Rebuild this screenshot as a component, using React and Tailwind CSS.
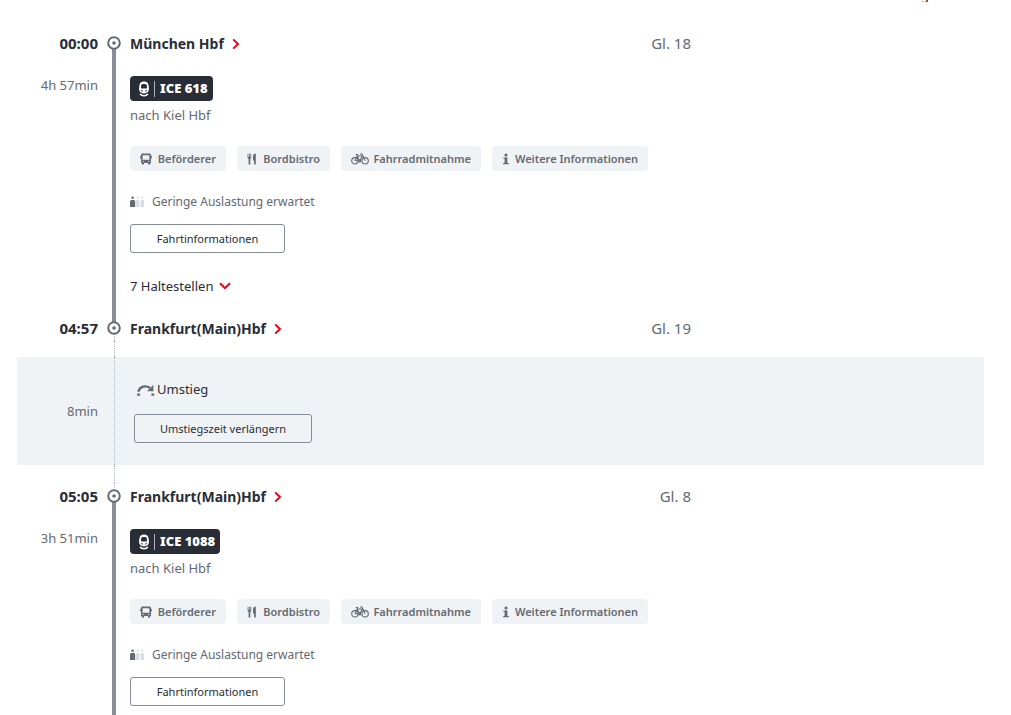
const stop = { ring: '#646973', line: '#878c96', red: '#ec0016' };

function Chevron({ down = false }) {
  return down ? (
    <svg width="12" height="8" viewBox="0 0 12 8" fill="none" stroke={stop.red} strokeWidth="2" aria-hidden="true">
      <path d="M1 1.2 6 6.2 11 1.2" />
    </svg>
  ) : (
    <svg width="8" height="12" viewBox="0 0 8 12" fill="none" stroke={stop.red} strokeWidth="2" aria-hidden="true">
      <path d="M1.2 1.4 6 6 1.2 10.6" />
    </svg>
  );
}

function TrainIcon() {
  return (
    <svg width="12" height="16" viewBox="0 0 12 16" aria-hidden="true">
      <path
        fill="#fff"
        fillRule="evenodd"
        d="M6 .6C8.8.6 10.3 2 10.6 4.4L11 8C11 10.8 9 12.4 6 12.4S1 10.8 1 8L1.4 4.4C1.7 2 3.2.6 6 .6ZM3.3 3.8 2.9 7C3.9 7.8 8.1 7.8 9.1 7L8.7 3.8C8.4 2.6 3.6 2.6 3.3 3.8ZM2.9 8.6C3 9.8 3.7 10.7 4.8 11L4.4 9.3ZM9.1 8.6C9 9.8 8.3 10.7 7.2 11L7.6 9.3Z"
      />
      <path fill="none" stroke="#fff" strokeWidth="1.5" d="M2 13C3.8 15.2 8.2 15.2 10 13" />
    </svg>
  );
}

function BusIcon() {
  return (
    <svg width="12" height="12" viewBox="0 0 12 12" fill="#646973" aria-hidden="true">
      <path
        fillRule="evenodd"
        d="M2.6.6H9.4C10.4.6 10.8 1.2 10.9 2L11 2.8H11.8V5.4H11V10H10.2V11.4H8V10H4V11.4H1.8V10H1V5.4H.2V2.8H1L1.1 2C1.2 1.2 1.6.6 2.6.6ZM2.8 2.2 2.5 6.8H9.5L9.2 2.2ZM2.3 8.2V9H3.8V8.2ZM8.2 8.2V9H9.7V8.2Z"
      />
    </svg>
  );
}

function CutleryIcon() {
  return (
    <svg width="10" height="12" viewBox="0 0 10 12" fill="#646973" aria-hidden="true">
      <path d="M.6.8H1.4V4H2V.8H2.8V4H3.4V.8H4.2V4.6C4.2 5.3 3.8 5.7 3.3 5.9V11.4H1.6V5.9C1 5.7.6 5.3.6 4.6Z" />
      <path d="M8.8.6V11.4H7.1V7.4H6V3.6C6 1.8 7.2.6 8.8.6Z" />
    </svg>
  );
}

function BikeIcon() {
  return (
    <svg width="18" height="12" viewBox="0 0 18 12" fill="none" stroke="#646973" strokeWidth="1.1" aria-hidden="true">
      <circle cx="3.9" cy="7.8" r="3.2" />
      <circle cx="14.1" cy="7.8" r="3.2" />
      <path d="M3.9 7.8 6.2 3H11.6L8.6 7.8H3.9M6 3 8.6 7.8M14.1 7.8 11 1H9M4.8 1.6H7.2" />
      <circle cx="8.7" cy="8" r="1" />
    </svg>
  );
}

function InfoIcon() {
  return (
    <svg width="8" height="12" viewBox="0 0 8 12" fill="#646973" aria-hidden="true">
      <circle cx="4" cy="2" r="1.6" />
      <path d="M1.4 4.4H5.4V9.9H6.8V11.3H1.2V9.9H2.6V5.8H1.4Z" />
    </svg>
  );
}

function LoadIcon() {
  return (
    <svg width="14" height="12" viewBox="0 0 14 12" aria-hidden="true">
      <g fill="#646973">
        <circle cx="2.6" cy="1.7" r="1.3" />
        <path d="M0 11V6C0 4.6.8 4 1.6 4H3.6C4.6 4 5.2 4.6 5.2 6V11Z" />
      </g>
      <g fill="#d7dce1">
        <circle cx="7.8" cy="1.7" r="1.1" />
        <path d="M6.2 11V5.4C6.2 4.5 6.7 4 7.4 4H8.2C9 4 9.4 4.5 9.4 5.4V11Z" />
        <circle cx="12.3" cy="1.7" r="1.1" />
        <path d="M10.6 11V5.4C10.6 4.5 11.2 4 11.8 4H12.7C13.5 4 14 4.5 14 5.4V11Z" />
      </g>
    </svg>
  );
}

function TransferIcon() {
  return (
    <svg width="18" height="14" viewBox="0 0 18 14" aria-hidden="true">
      <path fill="none" stroke="#646973" strokeWidth="2.4" d="M1.2 9.6C3 4.2 8.8 3 13 6" />
      <path fill="#646973" d="M16.4 2.8V9.2H10ZM.2 11.4H3V13.8H.2ZM14.4 11.4H17.2V13.8H14.4Z" />
    </svg>
  );
}

const row = 'grid grid-cols-[81px_32px_minmax(0,1fr)]';

function StopRow({ time, name, track, before, after }) {
  const segments = {
    none: '',
    solid: 'w-1 bg-[#878c96]',
    dotted: 'ml-px w-px border-l border-dotted border-[#afb4bb]',
  };
  return (
    <div className={`${row} h-[26px] items-center`}>
      <time className="text-right text-[15px] leading-5 font-bold">{time}</time>
      <div className="relative flex h-full flex-col items-center">
        <span className={`flex-1 ${segments[before]}`} />
        <span className={`flex-1 ${segments[after]}`} />
        <svg className="absolute inset-0 m-auto" width="14" height="14" viewBox="0 0 14 14" aria-hidden="true">
          <circle cx="7" cy="7" r="5.8" fill="#fff" stroke={stop.ring} strokeWidth="2" />
          <circle cx="7" cy="7" r="1.8" fill={stop.ring} />
        </svg>
      </div>
      <div className="flex items-center justify-between">
        <a href="#station" className="flex items-center gap-2 pt-0.5 text-sm leading-5 font-bold">
          {name}
          <Chevron />
        </a>
        <span className="mr-[293px] text-[15px] leading-5 text-[#646973]">{track}</span>
      </div>
    </div>
  );
}

function Chip({ icon, label, width }) {
  return (
    <li className={`flex h-[25px] items-center rounded bg-[#f0f3f5] px-2.5 text-[11px] font-semibold text-[#646973] ${width}`}>
      {icon}
      <span className="ml-auto pt-0.5">{label}</span>
    </li>
  );
}

function OutlineButton({ children, width }) {
  return (
    <button type="button" className={`h-[29px] rounded-[3px] border border-[#878c96] pt-0.5 text-[11px] ${width}`}>
      {children}
    </button>
  );
}

function Leg({ duration, train, stops }) {
  return (
    <div className={row}>
      <span className="pt-[19px] text-right text-[13px] leading-5 text-[#646973]">{duration}</span>
      <span className="w-1 justify-self-center bg-[#878c96]" />
      <div className="flex flex-col items-start pt-5">
        <span className="flex h-[25px] items-center rounded bg-[#282d37] pr-[5px] pl-2 text-[13px] font-black text-white">
          <TrainIcon />
          <span className="mr-[5px] ml-1 h-4 w-px bg-[#afb4bb]" />
          {train}
        </span>
        <span className="mt-1 text-[13px] leading-5 text-[#646973]">nach Kiel Hbf</span>
        <ul className="mt-[21px] flex flex-wrap gap-[11px]">
          <Chip icon={<BusIcon />} label="Beförderer" width="min-w-24" />
          <Chip icon={<CutleryIcon />} label="Bordbistro" width="min-w-[93px]" />
          <Chip icon={<BikeIcon />} label="Fahrradmitnahme" width="min-w-[140px]" />
          <Chip icon={<InfoIcon />} label="Weitere Informationen" width="min-w-[156px]" />
        </ul>
        <span className="mt-[21px] flex items-center gap-2 text-xs leading-5 text-[#646973]">
          <LoadIcon />
          Geringe Auslastung erwartet
        </span>
        <div className="mt-3">
          <OutlineButton width="w-[155px]">Fahrtinformationen</OutlineButton>
        </div>
        {stops && (
          <button type="button" className="mt-[23px] mb-[19px] flex items-center gap-1.5 text-[13px] leading-5">
            {stops}
            <Chevron down />
          </button>
        )}
      </div>
    </div>
  );
}

function DottedRow({ height }) {
  return (
    <div className={`${row} ${height}`}>
      <span />
      <span className="ml-4 w-px border-l border-dotted border-[#afb4bb]" />
    </div>
  );
}

export default function App() {
  return (
    <main className="flex h-screen flex-col overflow-hidden bg-white pr-[27px] pl-[17px] font-['Noto_Sans','Open_Sans',sans-serif] text-[#282d37]">
      <div className="mb-7 flex h-0.5 shrink-0 items-end justify-end overflow-hidden pr-[55px] text-sm leading-4">
        <span>g</span>
      </div>
      <StopRow time="00:00" name="München Hbf" track="Gl. 18" before="none" after="solid" />
      <Leg duration="4h 57min" train="ICE 618" stops="7 Haltestellen" />
      <StopRow time="04:57" name="Frankfurt(Main)Hbf" track="Gl. 19" before="solid" after="dotted" />
      <DottedRow height="h-4" />
      <section className={`${row} h-[108px] bg-[#f0f3f5]`}>
        <span className="self-center text-right text-[13px] leading-5 text-[#646973]">8min</span>
        <span className="ml-4 w-px border-l border-dotted border-[#afb4bb]" />
        <div className="flex flex-col items-start gap-[15px] pt-[22px] pl-1">
          <span className="flex items-center gap-0.5 pl-[3px] text-[13px] leading-5">
            <TransferIcon />
            Umstieg
          </span>
          <OutlineButton width="w-[178px]">Umstiegszeit verlängern</OutlineButton>
        </div>
      </section>
      <DottedRow height="h-[18px]" />
      <StopRow time="05:05" name="Frankfurt(Main)Hbf" track="Gl. 8" before="dotted" after="solid" />
      <div className="grid flex-1">
        <Leg duration="3h 51min" train="ICE 1088" />
      </div>
    </main>
  );
}
